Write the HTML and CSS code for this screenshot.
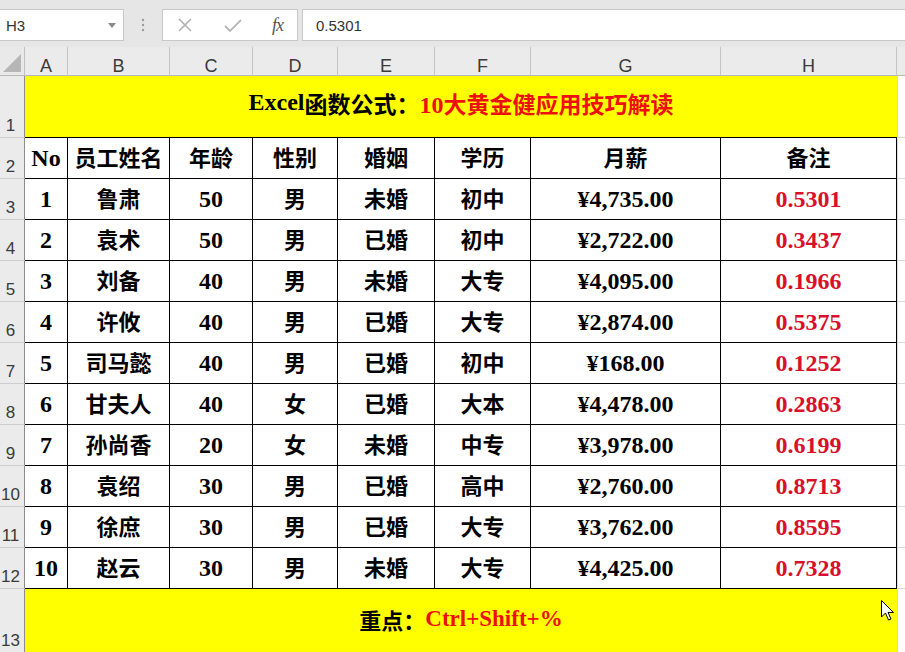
FILE: index.html
```html
<!DOCTYPE html>
<html lang="zh">
<head>
<meta charset="utf-8">
<title>Excel</title>
<link rel="stylesheet" href="styles.css">
</head>
<body>
<div class="app">
  <div class="toolbar">
    <div class="namebox"><span>H3</span><svg class="dd" width="8" height="5" viewBox="0 0 8 5"><path d="M0 0H8L4 5Z" fill="#8a8a8a"/></svg></div>
    <div class="dots"><svg width="4" height="14" viewBox="0 0 4 14"><circle cx="2" cy="2" r="1.2" fill="#9a9a9a"/><circle cx="2" cy="7" r="1.2" fill="#9a9a9a"/><circle cx="2" cy="12" r="1.2" fill="#9a9a9a"/></svg></div>
    <div class="fxbox">
      <svg width="16" height="16" viewBox="0 0 16 16"><path d="M2 2L14 14M14 2L2 14" stroke="#b0b0b0" stroke-width="1.6" fill="none"/></svg>
      <svg width="18" height="16" viewBox="0 0 18 16"><path d="M1 9L6 14L17 3" stroke="#b8b8b8" stroke-width="1.8" fill="none"/></svg>
      <span class="fx">fx</span>
    </div>
    <div class="formula">0.5301</div>
  </div>

  <div class="sheet">
    <div class="corner"><svg width="18" height="18" viewBox="0 0 18 18"><path d="M18 0V18H0Z" fill="#b6b6b6"/></svg></div>
    <div class="ch">A</div><div class="ch">B</div><div class="ch">C</div><div class="ch">D</div><div class="ch">E</div><div class="ch">F</div><div class="ch">G</div><div class="ch">H</div><div class="ch last"></div>

    <div class="rh">1</div>
    <div class="banner title"><span class="lt">Excel</span>函数公式：<span class="hl"><span class="lt">10</span>大黄金健应用技巧解读</span></div>
    <div class="ext"></div>

    <div class="rh">2</div>
    <div class="c n">No</div><div class="c">员工姓名</div><div class="c">年龄</div><div class="c">性别</div><div class="c">婚姻</div><div class="c">学历</div><div class="c">月薪</div><div class="c">备注</div><div class="ext"></div>

    <div class="rh">3</div>
    <div class="c n">1</div><div class="c">鲁肃</div><div class="c n">50</div><div class="c">男</div><div class="c">未婚</div><div class="c">初中</div><div class="c n">¥4,735.00</div><div class="c n red">0.5301</div><div class="ext"></div>

    <div class="rh">4</div>
    <div class="c n">2</div><div class="c">袁术</div><div class="c n">50</div><div class="c">男</div><div class="c">已婚</div><div class="c">初中</div><div class="c n">¥2,722.00</div><div class="c n red">0.3437</div><div class="ext"></div>

    <div class="rh">5</div>
    <div class="c n">3</div><div class="c">刘备</div><div class="c n">40</div><div class="c">男</div><div class="c">未婚</div><div class="c">大专</div><div class="c n">¥4,095.00</div><div class="c n red">0.1966</div><div class="ext"></div>

    <div class="rh">6</div>
    <div class="c n">4</div><div class="c">许攸</div><div class="c n">40</div><div class="c">男</div><div class="c">已婚</div><div class="c">大专</div><div class="c n">¥2,874.00</div><div class="c n red">0.5375</div><div class="ext"></div>

    <div class="rh">7</div>
    <div class="c n">5</div><div class="c">司马懿</div><div class="c n">40</div><div class="c">男</div><div class="c">已婚</div><div class="c">初中</div><div class="c n">¥168.00</div><div class="c n red">0.1252</div><div class="ext"></div>

    <div class="rh">8</div>
    <div class="c n">6</div><div class="c">甘夫人</div><div class="c n">40</div><div class="c">女</div><div class="c">已婚</div><div class="c">大本</div><div class="c n">¥4,478.00</div><div class="c n red">0.2863</div><div class="ext"></div>

    <div class="rh">9</div>
    <div class="c n">7</div><div class="c">孙尚香</div><div class="c n">20</div><div class="c">女</div><div class="c">未婚</div><div class="c">中专</div><div class="c n">¥3,978.00</div><div class="c n red">0.6199</div><div class="ext"></div>

    <div class="rh">10</div>
    <div class="c n">8</div><div class="c">袁绍</div><div class="c n">30</div><div class="c">男</div><div class="c">已婚</div><div class="c">高中</div><div class="c n">¥2,760.00</div><div class="c n red">0.8713</div><div class="ext"></div>

    <div class="rh">11</div>
    <div class="c n">9</div><div class="c">徐庶</div><div class="c n">30</div><div class="c">男</div><div class="c">已婚</div><div class="c">大专</div><div class="c n">¥3,762.00</div><div class="c n red">0.8595</div><div class="ext"></div>

    <div class="rh">12</div>
    <div class="c n">10</div><div class="c">赵云</div><div class="c n">30</div><div class="c">男</div><div class="c">未婚</div><div class="c">大专</div><div class="c n">¥4,425.00</div><div class="c n red">0.7328</div><div class="ext"></div>

    <div class="rh">13</div>
    <div class="banner foot">重点：<span class="hl lf">Ctrl+Shift+%</span></div>
    <div class="ext"></div>
  </div>

  <svg class="cursor" width="13" height="21" viewBox="0 0 13 21"><path d="M0.5 0.5V17L4.5 13L7.5 20L10 19L7 12.5H12.5Z" fill="#fff" stroke="#000" stroke-width="1"/></svg>
</div>
</body>
</html>
```

FILE: styles.css
```css
* { box-sizing: border-box; }
html, body { margin: 0; padding: 0; }
body {
  background: #e6e6e6;
  font-family: "Liberation Sans", "Noto Sans CJK SC", sans-serif;
}
.app {
  position: relative;
  width: 905px;
  height: 652px;
  overflow: hidden;
}
.toolbar {
  height: 47px;
  padding-top: 9px;
  display: flex;
  align-items: flex-start;
  background: #e6e6e6;
}
.namebox {
  width: 124px;
  height: 32px;
  background: #fff;
  border: 1px solid #c8c8c8;
  border-left: none;
  display: flex;
  align-items: center;
  justify-content: space-between;
  padding: 0 7px 0 6px;
  font-size: 15px;
  color: #333;
}
.dots {
  width: 38px;
  height: 32px;
  display: flex;
  align-items: center;
  justify-content: center;
}
.fxbox {
  width: 136px;
  height: 32px;
  background: #fff;
  border: 1px solid #c8c8c8;
  display: flex;
  align-items: center;
  justify-content: space-between;
  padding: 0 14px 0 14px;
}
.fx {
  font-family: "Liberation Serif", serif;
  font-style: italic;
  font-size: 18px;
  color: #555;
  letter-spacing: -1px;
}
.formula {
  flex: 1;
  margin-left: 4px;
  height: 32px;
  background: #fff;
  border: 1px solid #c8c8c8;
  border-right: none;
  display: flex;
  align-items: center;
  padding-left: 13px;
  font-size: 15px;
  color: #333;
}
.sheet {
  display: grid;
  grid-template-columns: 25px 43px 102px 83px 85px 97px 96px 190px 176px 8px;
  grid-template-rows: 29px 62px repeat(11, 41px) 64px;
  background: #fff;
}
.corner {
  background: #e9e9e9;
  border-right: 1px solid #c0c0c0;
  border-bottom: 1px solid #b8b8b8;
  display: flex;
  align-items: flex-end;
  justify-content: flex-end;
  padding: 0 3px 3px 0;
}
.ch {
  background: #ebebeb;
  border-right: 1px solid #c4c4c4;
  border-bottom: 1px solid #b8b8b8;
  display: flex;
  align-items: flex-end;
  justify-content: center;
  font-size: 18px;
  line-height: 18px;
  color: #3a3a3a;
}
.ch.last { border-right: none; }
.rh {
  background: #ebebeb;
  border-right: 1px solid #8c8c8c;
  border-bottom: 1px solid #cdcdcd;
  display: flex;
  align-items: flex-end;
  justify-content: center;
  padding: 0 3px 1px 0;
  font-size: 17px;
  color: #3a3a3a;
}
.c {
  background: #fff;
  border-right: 1px solid #000;
  border-bottom: 1px solid #000;
  display: flex;
  align-items: center;
  justify-content: center;
  font-family: "Liberation Serif", "Noto Sans CJK SC", serif;
  font-weight: 700;
  font-size: 22px;
  color: #000;
  white-space: nowrap;
  padding-bottom: 4px;
}
.c.n { font-size: 24px; padding-bottom: 0; }
.red { color: #d8102a; }
.banner {
  grid-column: span 8;
  background: #ffff00;
  display: flex;
  align-items: center;
  justify-content: center;
  font-family: "Liberation Serif", "Noto Sans CJK SC", serif;
  font-weight: 700;
  font-size: 23px;
  color: #000;
  white-space: nowrap;
}
.lt { font-size: 24px; }
.lf { font-size: 23px; }
.title { border-bottom: 1px solid #000; padding-bottom: 8px; }
.foot { border-top: 1px solid #000; margin-top: -1px; font-size: 22px; padding-bottom: 4px; }
.hl { color: #ee1010; }
.ext {
  background: #fff;
  border-bottom: 1px solid #d9d9d9;
  border-left: 1px solid #d9d9d9;
}
.cursor {
  position: absolute;
  left: 881px;
  top: 600px;
}
```
